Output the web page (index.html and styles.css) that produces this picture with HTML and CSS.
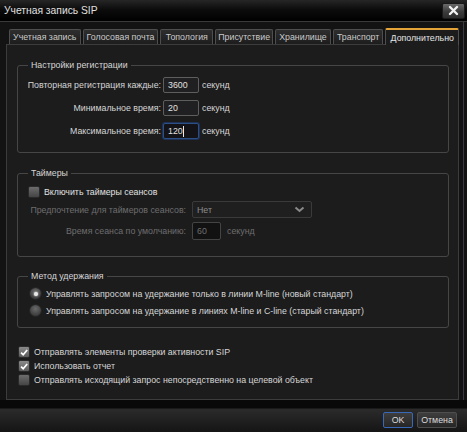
FILE: index.html
```html
<!DOCTYPE html>
<html lang="ru">
<head>
<meta charset="utf-8">
<title>Учетная запись SIP</title>
<link rel="stylesheet" href="styles.css">
</head>
<body>
<div class="window">
  <div class="titlebar">
    <span class="title">Учетная запись SIP</span>
    <button class="close" aria-label="Закрыть"><svg width="11" height="11" viewBox="0 0 11 11"><path d="M2 2 L9 9 M9 2 L2 9" stroke="#f2f2f2" stroke-width="2.4" stroke-linecap="round"/></svg></button>
  </div>
  <div class="body">
    <div class="tabs">
      <div class="tab">Учетная запись</div>
      <div class="tab">Голосовая почта</div>
      <div class="tab">Топология</div>
      <div class="tab">Присутствие</div>
      <div class="tab">Хранилище</div>
      <div class="tab">Транспорт</div>
      <div class="tab active">Дополнительно</div>
    </div>
    <div class="pane">
      <fieldset class="group g-reg">
        <legend>Настройки регистрации</legend>
        <div class="form-reg">
          <span class="lbl">Повторная регистрация каждые:</span><span class="input">3600</span><span class="unit">секунд</span>
          <span class="lbl">Минимальное время:</span><span class="input">20</span><span class="unit">секунд</span>
          <span class="lbl">Максимальное время:</span><span class="input focus">120<i class="caret"></i></span><span class="unit">секунд</span>
        </div>
      </fieldset>

      <fieldset class="group g-timers">
        <legend>Таймеры</legend>
        <div class="check-row timers-check"><span class="cb"></span><span>Включить таймеры сеансов</span></div>
        <div class="form-timers">
          <span class="lbl dis">Предпочтение для таймеров сеансов:</span>
          <span class="select">Нет<svg class="chev" width="11" height="7" viewBox="0 0 11 7"><path d="M1.5 1.5 L5.5 5 L9.5 1.5" fill="none" stroke="#8a8a8a" stroke-width="2"/></svg></span>
          <span class="lbl dis">Время сеанса по умолчанию:</span>
          <span class="inline"><span class="input dis-input">60</span><span class="unit dis">секунд</span></span>
        </div>
      </fieldset>

      <fieldset class="group g-hold">
        <legend>Метод удержания</legend>
        <div class="radio-row"><span class="radio on"></span><span>Управлять запросом на удержание только в линии M-line (новый стандарт)</span></div>
        <div class="radio-row"><span class="radio"></span><span>Управлять запросом на удержание в линиях M-line и C-line (старый стандарт)</span></div>
      </fieldset>

      <div class="checks">
        <div class="check-row"><span class="cb on"><svg width="11" height="11" viewBox="0 0 11 11"><path d="M2.3 5.6 L4.6 8 L9 2.8" fill="none" stroke="#fff" stroke-width="1.9"/></svg></span><span>Отправлять элементы проверки активности SIP</span></div>
        <div class="check-row"><span class="cb on"><svg width="11" height="11" viewBox="0 0 11 11"><path d="M2.3 5.6 L4.6 8 L9 2.8" fill="none" stroke="#fff" stroke-width="1.9"/></svg></span><span>Использовать отчет</span></div>
        <div class="check-row"><span class="cb"></span><span>Отправлять исходящий запрос непосредственно на целевой объект</span></div>
      </div>
    </div>
  </div>
  <div class="footer">
    <button class="btn ok">OK</button>
    <button class="btn cancel">Отмена</button>
  </div>
</div>
</body>
</html>
```

FILE: styles.css
```css
* { box-sizing: border-box; }
html, body { margin: 0; padding: 0; }
body {
  width: 467px;
  height: 432px;
  overflow: hidden;
  background: #121212;
  font-family: "Liberation Sans", Arial, sans-serif;
  font-size: 8.8px;
  color: #d6d6d6;
}
.window {
  width: 467px;
  height: 432px;
  display: flex;
  flex-direction: column;
  background: #131313;
}
.titlebar {
  height: 22px;
  flex: none;
  display: flex;
  align-items: center;
  justify-content: space-between;
  padding: 0 2px 0 4px;
  background: linear-gradient(#262626 0, #0c0c0c 45%, #000 100%);
  border-bottom: 1px solid #3a3a3a;
}
.title {
  font-size: 10.3px;
  color: #e0e0e0;
}
.close {
  width: 23px;
  height: 16px;
  margin: 0;
  padding: 0;
  display: flex;
  align-items: center;
  justify-content: center;
  border: 1px solid #1a1a1a;
  border-radius: 2px;
  background: linear-gradient(#6a6a6a, #3c3c3c 55%, #2c2c2c);
}
.body {
  height: 378px;
  flex: none;
  padding: 5px 4px 0 6px;
  margin-right: 3px;
  border-right: 1px solid #3a3a42;
  display: flex;
  flex-direction: column;
}
.tabs {
  display: flex;
  align-items: flex-end;
  gap: 2px;
  padding-left: 3px;
  height: 17px;
  flex: none;
}
.tab {
  height: 15px;
  padding: 0 3px;
  display: flex;
  align-items: center;
  justify-content: center;
  border: 1px solid #4e4e4e;
  border-bottom: none;
  border-radius: 2px 2px 0 0;
  background: linear-gradient(#2e2e2e, #1d1d1d);
  color: #cacaca;
  white-space: nowrap;
}
.tab:nth-child(1) { width: 72px; }
.tab:nth-child(2) { width: 76px; }
.tab:nth-child(3) { width: 53px; }
.tab:nth-child(4) { width: 58px; }
.tab:nth-child(5) { width: 56px; }
.tab:nth-child(6) { width: 51px; }
.tab.active {
  width: 74px;
  height: 17px;
  border-top: 2px solid #e5a438;
  background: #1c1c1d;
  color: #e4e4e4;
  position: relative;
  margin-bottom: -1px;
  z-index: 1;
}
.pane {
  flex: 1;
  border: 1px solid #3c3c3c;
  background: #1c1c1d;
  padding: 0 9px 0 10px;
  display: flex;
  flex-direction: column;
}
.group {
  margin: 0;
  min-inline-size: 0;
  border: 1px solid #464646;
  border-radius: 3px;
  padding: 0 6px;
}
.group legend {
  padding: 0 3px;
  margin-left: 4px;
  line-height: 12px;
  color: #d6d6d6;
}
.g-reg { margin-top: 14px; padding-top: 6px; padding-bottom: 13px; }
.g-timers { margin-top: 14px; padding-top: 6px; padding-bottom: 16px; }
.g-hold { margin-top: 13px; padding-top: 3px; padding-bottom: 8px; }

.form-reg {
  display: grid;
  grid-template-columns: 137px 36px auto;
  column-gap: 2px;
  row-gap: 7px;
  align-items: center;
}
.lbl { text-align: right; white-space: nowrap; color: #d6d6d6; }
.lbl.dis, .unit.dis { color: #6e6e6e; }
.unit { margin-left: 1px; color: #d6d6d6; }
.input {
  height: 16px;
  border: 1px solid #5e5e5e;
  border-radius: 2px;
  background: #202022;
  color: #e0e0e0;
  padding: 0 4px;
  display: flex;
  align-items: center;
}
.input.focus {
  border-color: #2d4f86;
  box-shadow: 0 0 0 1px #1d3256;
  background: #141418;
}
.caret {
  display: inline-block;
  width: 1px;
  height: 11px;
  background: #e8e8e8;
}
.check-row {
  display: flex;
  align-items: center;
  gap: 4px;
  height: 14px;
  white-space: nowrap;
}
.timers-check { margin-left: 4px; color: #e2e2e2; }
.cb {
  width: 12px;
  height: 12px;
  flex: none;
  border: 1px solid #2a2a2a;
  border-radius: 2px;
  background: linear-gradient(#6c6c6c, #454545);
  display: flex;
  align-items: center;
  justify-content: center;
}
.cb.on { background: linear-gradient(#8a8a8a, #5c5c5c); }
.cb svg { display: block; }
.form-timers {
  margin-top: 2px;
  display: grid;
  grid-template-columns: 162px auto;
  column-gap: 6px;
  row-gap: 4px;
  align-items: center;
}
.inline {
  display: flex;
  align-items: center;
  gap: 5px;
}
.inline .input { width: 29px; height: 18px; }
.select {
  width: 120px;
  height: 17px;
  border: 1px solid #3a3a3a;
  border-radius: 2px;
  background: #1f1f20;
  color: #8c8c8c;
  padding: 0 6px 0 4px;
  display: flex;
  align-items: center;
  justify-content: space-between;
}
.dis-input {
  background: #121213;
  border-color: #444;
  color: #6e6e6e;
}
.radio-row {
  display: flex;
  align-items: center;
  gap: 5px;
  height: 17px;
  margin-left: 6px;
  white-space: nowrap;
  color: #d6d6d6;
}
.radio {
  width: 11px;
  height: 11px;
  flex: none;
  border-radius: 50%;
  background: radial-gradient(circle at 50% 35%, #6a6a6a, #3e3e3e 70%, #2c2c2c);
  box-shadow: 0 0 0 1px #262626;
  display: flex;
  align-items: center;
  justify-content: center;
}
.radio.on::after {
  content: "";
  width: 4px;
  height: 4px;
  border-radius: 50%;
  background: #e8e8e8;
  box-shadow: 0 0 2px #fff;
}
.checks {
  margin-top: 17px;
  margin-left: 1px;
  display: flex;
  flex-direction: column;
  color: #d6d6d6;
}
.footer {
  height: 32px;
  flex: none;
  display: flex;
  justify-content: flex-end;
  align-items: flex-start;
  gap: 4px;
  padding: 12px 10px 0 0;
  background: linear-gradient(#090909 0, #090909 8px, #2b2b2b 9px, #151515 100%);
}
.btn {
  height: 16px;
  margin: 0;
  padding: 0;
  font-family: "Liberation Sans", Arial, sans-serif;
  font-size: 8.8px;
  color: #dcdcdc;
  border: 1px solid #4e4e4e;
  border-radius: 2px;
  background: linear-gradient(#3e3e3e, #262626);
}
.btn.ok { width: 30px; border-color: #3a68b8; }
.btn.cancel { width: 40px; }
```
